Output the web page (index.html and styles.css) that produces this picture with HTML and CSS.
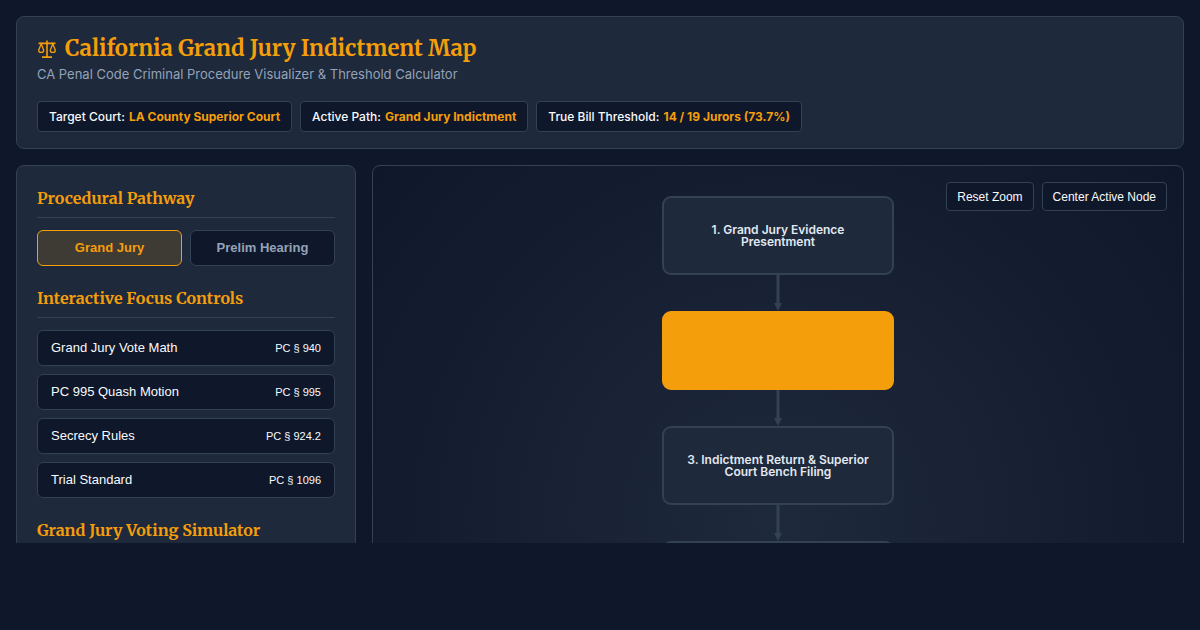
FILE: index.html
```html
<!DOCTYPE html>
<html lang="en">
<head>
  <meta charset="UTF-8" />
  <title>California Grand Jury Indictment Map</title>
  <meta name="viewport" content="width=device-width, initial-scale=1.0" />
  <link rel="stylesheet" href="styles.css">
</head>
<body>
  <div class="app">
    <header class="header">
      <h1>
        <svg class="scale-icon" viewBox="0 0 20 20" aria-hidden="true">
          <path class="frame" d="M10 1.5V18M5 18.1h10M1.5 4.4h17" />
          <path class="pans" d="M4.2 4.8L1.7 11.2c0 3 5 3 5 0zM15.8 4.8L13.3 11.2c0 3 5 3 5 0z" />
        </svg>
        California Grand Jury Indictment Map
      </h1>
      <p class="subtitle">CA Penal Code Criminal Procedure Visualizer &amp; Threshold Calculator</p>
      <div class="badges">
        <div class="badge">Target Court: <strong>LA County Superior Court</strong></div>
        <div class="badge">Active Path: <strong>Grand Jury Indictment</strong></div>
        <div class="badge">True Bill Threshold: <strong>14 / 19 Jurors (73.7%)</strong></div>
      </div>
    </header>

    <main class="main">
      <aside class="sidebar">
        <section>
          <h2>Procedural Pathway</h2>
          <div class="toggle">
            <button class="path-btn active">Grand Jury</button>
            <button class="path-btn">Prelim Hearing</button>
          </div>
        </section>

        <section>
          <h2>Interactive Focus Controls</h2>
          <div class="focus-list">
            <button class="focus-btn"><span>Grand Jury Vote Math</span><small>PC § 940</small></button>
            <button class="focus-btn"><span>PC 995 Quash Motion</span><small>PC § 995</small></button>
            <button class="focus-btn"><span>Secrecy Rules</span><small>PC § 924.2</small></button>
            <button class="focus-btn"><span>Trial Standard</span><small>PC § 1096</small></button>
          </div>
        </section>

        <section>
          <h2>Grand Jury Voting Simulator</h2>
        </section>
      </aside>

      <div class="canvas">
        <div class="canvas-controls">
          <button>Reset Zoom</button>
          <button>Center Active Node</button>
        </div>
        <div class="flow">
          <div class="node">1. Grand Jury Evidence<br>Presentment</div>
          <svg class="arrow" viewBox="0 0 8 36"><path d="M2.5 0h3v28H8L4 36 0 28h2.5z" /></svg>
          <div class="node active"></div>
          <svg class="arrow" viewBox="0 0 8 36"><path d="M2.5 0h3v28H8L4 36 0 28h2.5z" /></svg>
          <div class="node">3. Indictment Return &amp; Superior<br>Court Bench Filing</div>
          <svg class="arrow" viewBox="0 0 8 36"><path d="M2.5 0h3v28H8L4 36 0 28h2.5z" /></svg>
          <div class="node"></div>
        </div>
      </div>
    </main>
  </div>
</body>
</html>
```
FILE: styles.css
```css
:root {
  --bg: #0f172a;
  --panel: #1e293b;
  --border: #334155;
  --accent: #f59e0b;
  --text: #f8fafc;
  --muted: #94a3b8;
}

* {
  box-sizing: border-box;
}

body {
  margin: 0;
  background: var(--bg);
  color: var(--text);
  font-family: Inter, sans-serif;
}

.app {
  height: calc(100vh - 87px);
  padding: 16px 16px 0;
  overflow: hidden;
}

.header {
  background: var(--panel);
  border: 1px solid var(--border);
  border-radius: 8px;
  padding: 16px 20px;
  margin-bottom: 16px;
}

h1,
h2 {
  margin: 0;
  color: var(--accent);
  font-family: Merriweather, "Noto Serif", "Liberation Serif", serif;
}

h1 {
  display: flex;
  align-items: center;
  gap: 8px;
  font-size: 22px;
  line-height: 31px;
}

.scale-icon {
  width: 20px;
  height: 20px;
  fill: none;
  stroke: currentColor;
}

.scale-icon .frame {
  stroke-width: 1.6;
}

.scale-icon .pans {
  stroke-width: 1.3;
}

.subtitle {
  margin: 0 0 17px;
  color: var(--muted);
  font-size: 13px;
  line-height: 20px;
}

.badges {
  display: flex;
  gap: 8px;
}

.badge {
  background: var(--bg);
  border: 1px solid var(--border);
  border-radius: 4px;
  padding: 5px 11px;
  font-size: 12px;
  font-weight: 500;
  line-height: 19px;
}

.badge strong {
  margin-left: 1px;
  color: var(--accent);
  font-weight: 700;
}

.main {
  display: grid;
  grid-template-columns: 340px 1fr;
  gap: 16px;
  min-height: 700px;
}

.sidebar {
  display: flex;
  flex-direction: column;
  gap: 20px;
  background: var(--panel);
  border: 1px solid var(--border);
  border-radius: 8px;
  padding: 20px;
}

h2 {
  border-bottom: 1px solid var(--border);
  padding-bottom: 6px;
  margin-bottom: 12px;
  font-size: 16px;
  line-height: 25px;
}

.toggle {
  display: grid;
  grid-template-columns: 1fr 1fr;
  gap: 8px;
}

button {
  background: var(--bg);
  border: 1px solid var(--border);
  color: var(--text);
  font-family: "Liberation Sans", Arial, sans-serif;
  cursor: pointer;
}

.path-btn {
  border-radius: 6px;
  padding: 9px;
  color: var(--muted);
  font-size: 13px;
  font-weight: bold;
  line-height: 16px;
}

.path-btn.active {
  background: rgba(245, 158, 11, 0.15);
  border-color: var(--accent);
  color: var(--accent);
}

.focus-list {
  display: flex;
  flex-direction: column;
  gap: 8px;
}

.focus-btn {
  display: flex;
  justify-content: space-between;
  align-items: center;
  border-radius: 6px;
  padding: 9px 13px;
  font-size: 13px;
  line-height: 16px;
}

.focus-btn small {
  font-size: 11px;
}

.canvas {
  position: relative;
  background: radial-gradient(circle at center, #1e293b 0%, #0f172a 100%);
  border: 1px solid var(--border);
  border-radius: 8px;
}

.canvas-controls {
  position: absolute;
  top: 16px;
  right: 16px;
  display: flex;
  gap: 8px;
}

.canvas-controls button {
  border-radius: 4px;
  padding: 7px 10px 6px;
  font-size: 12px;
  line-height: 14px;
}

.flow {
  display: flex;
  flex-direction: column;
  align-items: center;
  padding-top: 30px;
}

.node {
  display: flex;
  justify-content: center;
  align-items: center;
  width: 232px;
  height: 79px;
  background: var(--panel);
  border: 2px solid var(--border);
  border-radius: 9px;
  font-size: 12px;
  font-weight: 600;
  line-height: 12px;
  text-align: center;
  color: #e2e8f0;
}

.node.active {
  background: var(--accent);
  border-color: var(--accent);
}

.arrow {
  width: 8px;
  height: 36px;
  fill: var(--border);
}
```
